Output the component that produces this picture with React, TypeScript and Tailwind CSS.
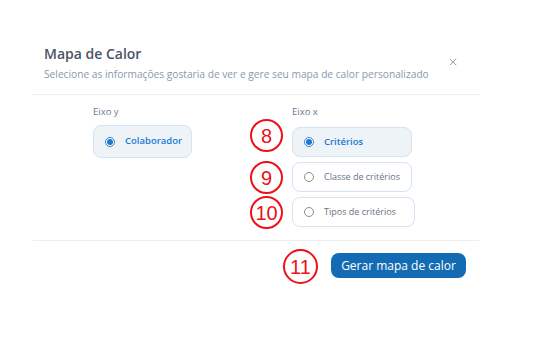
import { X } from "lucide-react";

type Option = { label: string; selected: boolean };

const eixoY: Option[] = [{ label: "Colaborador", selected: true }];

const eixoX: Option[] = [
  { label: "Critérios", selected: true },
  { label: "Classe de critérios", selected: false },
  { label: "Tipos de critérios", selected: false },
];

function Radio({ selected }: { selected: boolean }) {
  if (selected) {
    return (
      <span className="flex h-[10px] w-[10px] items-center justify-center rounded-full border border-[#2f86d6] bg-white">
        <span className="h-[6px] w-[6px] rounded-full bg-[#1f78cf]" />
      </span>
    );
  }
  return <span className="h-[10px] w-[10px] rounded-full border border-[#8c8c8c] bg-white" />;
}

function OptionBox({ option, className }: { option: Option; className: string }) {
  return (
    <div
      className={`flex items-center gap-[10px] rounded-[8px] border pl-[11px] ${
        option.selected ? "border-[#d5e3f2] bg-[#eef3f8]" : "border-[#d5e3f2] bg-white"
      } ${className}`}
    >
      <Radio selected={option.selected} />
      <span
        className={
          option.selected
            ? "text-[9.5px] font-semibold text-[#2079d2]"
            : "text-[9px] text-[#6b7280]"
        }
      >
        {option.label}
      </span>
    </div>
  );
}

// red annotation markers drawn over the screenshot
const markers = [
  { n: "8", x: 250, y: 119, size: 33 },
  { n: "9", x: 250, y: 161, size: 33 },
  { n: "10", x: 250, y: 196, size: 33 },
  { n: "11", x: 283, y: 249, size: 35 },
];

export default function App() {
  return (
    <div className="relative h-[345px] w-[533px] overflow-hidden bg-white font-['Open_Sans',sans-serif]">
      <div className="ml-[33px] w-[446px] pt-[44px]">
        {/* header */}
        <div className="flex items-start justify-between pb-[12px] pl-[11px] pr-[20px]">
          <div>
            <h2 className="text-[14px] font-semibold leading-[20px] text-[#4a5566]">Mapa de Calor</h2>
            <p className="mt-[2px] text-[10.2px] leading-[16px] text-[#8799b0]">
              Selecione as informações gostaria de ver e gere seu mapa de calor personalizado
            </p>
          </div>
          <X className="mt-[12px] h-[12px] w-[12px] text-[#666]" strokeWidth={1.3} />
        </div>

        <div className="border-t border-[#eceef1]" />

        {/* body */}
        <div className="flex pb-[13px] pl-[60px] pt-[10px]">
          <div className="w-[199px]">
            <div className="text-[9.5px] font-medium leading-[14px] text-[#6b7a90]">Eixo y</div>
            <div className="mt-[6px] flex flex-col">
              {eixoY.map((o) => (
                <OptionBox key={o.label} option={o} className="h-[33px] w-[99px]" />
              ))}
            </div>
          </div>
          <div>
            <div className="text-[9.5px] font-medium leading-[14px] text-[#6b7a90]">Eixo x</div>
            <div className="mt-[8px] flex flex-col gap-[5px]">
              <OptionBox option={eixoX[0]} className="h-[30px] w-[120px]" />
              <OptionBox option={eixoX[1]} className="h-[30px] w-[120px]" />
              <OptionBox option={eixoX[2]} className="h-[30px] w-[123px]" />
            </div>
          </div>
        </div>

        <div className="border-t border-[#eceef1]" />

        {/* footer */}
        <div className="flex justify-end pr-[13px] pt-[12px]">
          <button className="h-[25px] w-[135px] rounded-[8px] bg-[#136bb3] text-[12px] font-medium text-white">
            Gerar mapa de calor
          </button>
        </div>
      </div>

      {markers.map((m) => (
        <div
          key={m.n}
          className="absolute flex items-center justify-center rounded-full border-[2.5px] border-[#ee0f17] bg-white font-['Liberation_Sans',sans-serif] text-[20px] text-[#ee0f17]"
          style={{ left: m.x, top: m.y, width: m.size, height: m.size }}
        >
          {m.n}
        </div>
      ))}
    </div>
  );
}
